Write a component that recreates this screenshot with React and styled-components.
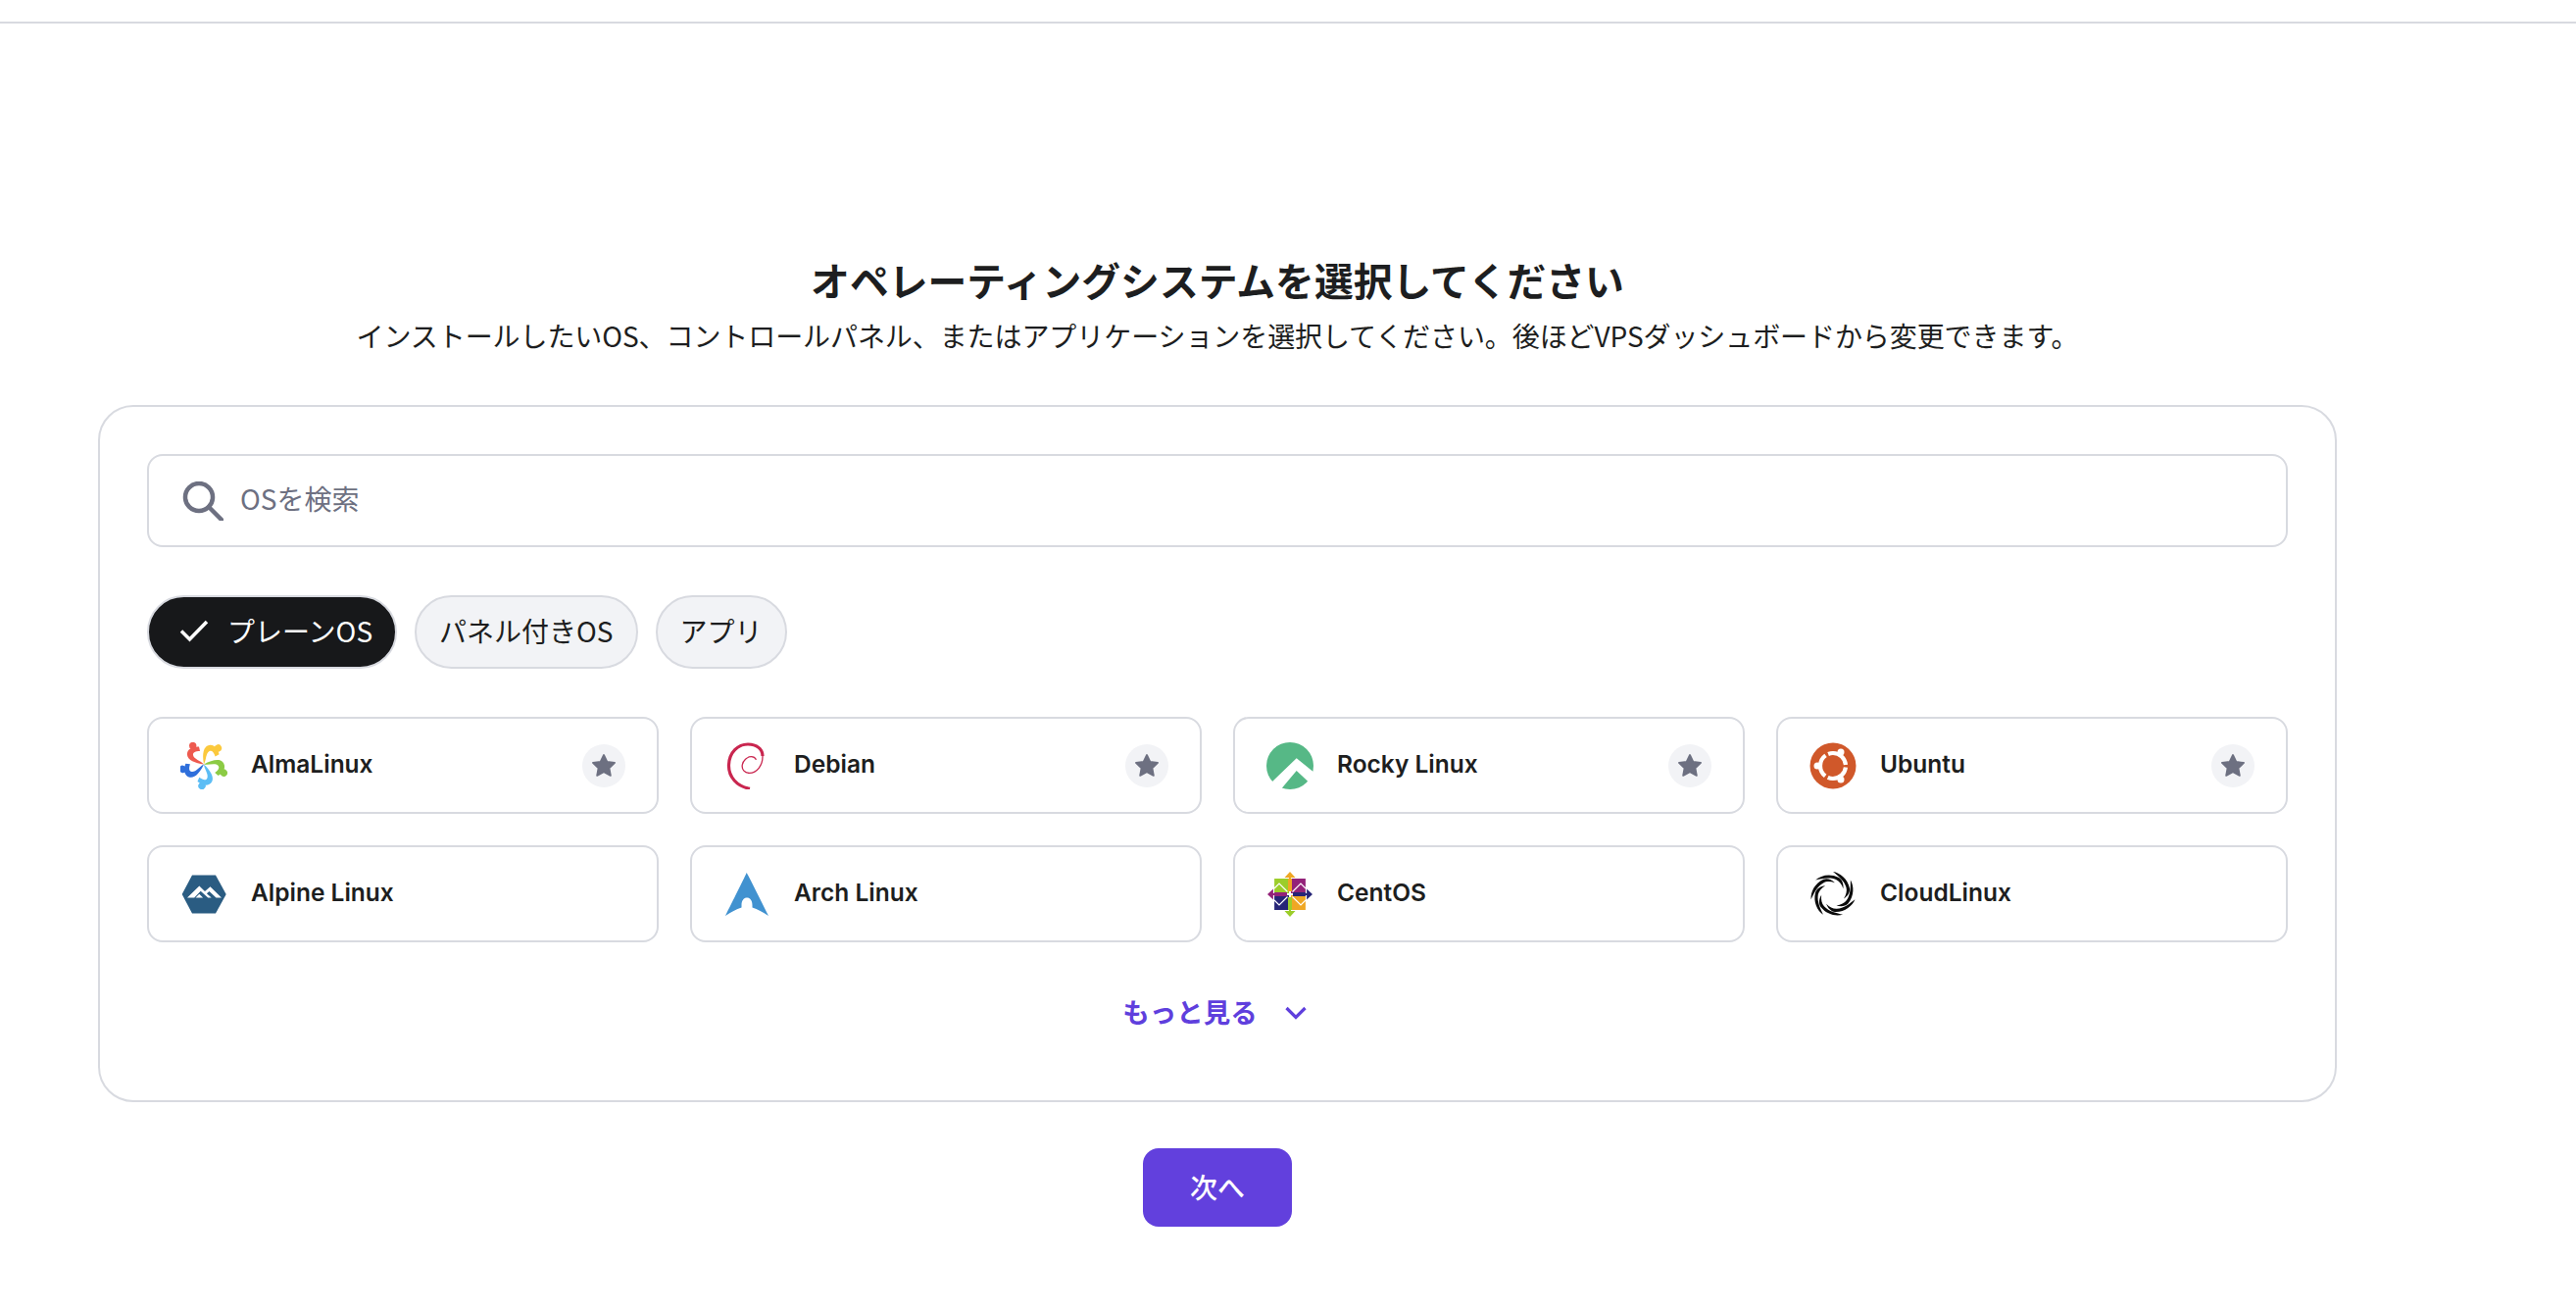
import styled, { createGlobalStyle } from "styled-components";
import { useState } from "react";

const GlobalStyle = createGlobalStyle`
  * { box-sizing: border-box; }
  html, body { margin: 0; padding: 0; background: #fff; }
  body {
    font-family: "Inter", "Noto Sans CJK JP", sans-serif;
    color: #1d1e20;
  }
`;

const CJK = `"Noto Sans CJK JP", "Inter", sans-serif`;

const AlmaLogo = () => {
  const parts = [
    ["#ee5a4f", 0],
    ["#fbc93d", 72],
    ["#8ccb45", 144],
    ["#5cbdf5", 216],
    ["#2f6fdb", 288],
  ];
  return (
    <svg width="48" height="48" viewBox="0 0 48 48">
      {parts.map(([color, angle]) => (
        <g key={angle} transform={`rotate(${angle} 24 22.5)`} fill={color}>
          <circle cx="12.7" cy="3.6" r="3.7" />
          <path d="M19 4.500C11 4 6.500 8 7 13c.5 5 8 8.500 17 9.500-3-3.500-10.500-5.500-11-9.500-.3-2.500 2-4 7-4z" />
        </g>
      ))}
    </svg>
  );
};

const DebianLogo = () => (
  <svg width="48" height="48" viewBox="0 0 48 48" fill="none" stroke="#c9264f">
    <path strokeWidth="3.2" d="M27 47.300C14 45 5 35.500 5.500 23 6 10 15 2 25 2c9 0 15 5 15 12" />
    <path strokeWidth="1.300" d="M40 13.800c.3 10-6 17.500-13.500 17.500-5 0-8-3.800-7.200-8.300.8-4.500 4.700-8.300 9.200-8.300 2.500 0 4 1.200 5 3" />
  </svg>
);

const RockyLogo = () => (
  <svg width="48" height="48" viewBox="0 0 48 48">
    <circle cx="24" cy="24" r="24" fill="#56b886" />
    <polygon fill="#fff" points="30.7,16.3 5,41 14.7,48 30.7,29 43,40.500 49,31" />
  </svg>
);

const UbuntuLogo = () => (
  <svg width="48" height="48" viewBox="0 0 48 48">
    <circle cx="24" cy="24" r="23.5" fill="#d0582a" />
    <circle
      cx="24"
      cy="24"
      r="13"
      fill="none"
      stroke="#fff"
      strokeWidth="4.2"
      strokeDasharray="24.2 3"
      strokeDashoffset="-1.5"
    />
    <circle cx="32" cy="10" r="3.500" fill="#fff" />
    <circle cx="8" cy="24" r="3.500" fill="#fff" />
    <circle cx="32" cy="38" r="3.500" fill="#fff" />
  </svg>
);

const AlpineLogo = () => (
  <svg width="48" height="48" viewBox="0 0 48 48">
    <polygon fill="#2a5c82" points="12,4.500 36,4.500 46.700,24 36,43.500 12,43.500 1.700,24" />
    <path
      fill="#fff"
      d="M7 27.500 19.300 15.500 25 21l5.500-4.800L42 27.500h-5.500l-7-6.500-2.600 2.300 4.800 4.200h-3.500l-7.500-6.800-6.500 6.800zM15.500 27.500l3.800-3.800 3.800 3.800z"
    />
  </svg>
);

const ArchLogo = () => (
  <svg width="48" height="48" viewBox="0 0 48 48">
    <path
      fill="#4192d0"
      d="M23.700 2C20 10 10 30 2 46c6-4 11-6.500 16.500-8.500V35c0-5 2.500-7.500 5.500-7.500s5.500 2.500 5.500 7.500v2.500C35 39.500 40 42 46 46 38 30 28 10 23.700 2z"
    />
  </svg>
);

const CentosLogo = () => (
  <svg width="48" height="48" viewBox="0 0 48 48">
    <rect x="8" y="8" width="15" height="15" fill="#9ccd2a" />
    <rect x="25" y="8" width="15" height="15" fill="#932279" />
    <rect x="8" y="25" width="15" height="15" fill="#262577" />
    <rect x="25" y="25" width="15" height="15" fill="#efa724" />
    <polygon fill="#efa724" points="24,1 30,7.500 26,7.500 26,21 22,21 22,7.500 18,7.500" />
    <polygon fill="#262577" points="47,24 40.500,30 40.500,26 27,26 27,22 40.500,22 40.500,18" />
    <polygon fill="#9ccd2a" points="24,47 18,40.500 22,40.500 22,27 26,27 26,40.500 30,40.500" />
    <polygon fill="#932279" points="1,24 7.500,18 7.500,22 21,22 21,26 7.500,26 7.500,30" />
    <g stroke="#fff" strokeWidth="1.2" fill="none">
      <path d="M21.500 21.500 13 13l-5 5M26.500 21.500 35 13l5 5M21.500 26.500 13 35l-5-5M26.500 26.500 35 35l5-5" />
      <path d="M7.500 7.500h15.500M25 7.500h15.500v15.500M40.500 25v15.500H25M23 40.500H7.500V25M7.500 23V7.500" />
    </g>
  </svg>
);

const CloudLinuxLogo = () => (
  <svg width="48" height="48" viewBox="0 0 48 48">
    {[0, 51, 103, 154, 206, 257, 309].map((angle) => (
      <path
        key={angle}
        transform={`rotate(${angle} 24 24)`}
        fill="#0b0b0b"
        d="M24 1c7 1 15 7 17 17 .5 4-2 8-6 10.500 2.500-4 3.500-8 2.500-11.500C35.500 10 29 5 24 1z"
      />
    ))}
  </svg>
);

const Star = () => (
  <svg width="28" height="28" viewBox="0 0 24 24" fill="#6d7081">
    <path
      d="M12 2.500l2.900 6 6.600.9-4.800 4.600 1.200 6.500-5.900-3.200-5.900 3.200 1.200-6.500L2.500 9.400l6.600-.9z"
      stroke="#6d7081"
      strokeWidth="1.500"
      strokeLinejoin="round"
    />
  </svg>
);

const oses = [
  { name: "AlmaLinux", Logo: AlmaLogo, star: true },
  { name: "Debian", Logo: DebianLogo, star: true },
  { name: "Rocky Linux", Logo: RockyLogo, star: true },
  { name: "Ubuntu", Logo: UbuntuLogo, star: true },
  { name: "Alpine Linux", Logo: AlpineLogo },
  { name: "Arch Linux", Logo: ArchLogo },
  { name: "CentOS", Logo: CentosLogo },
  { name: "CloudLinux", Logo: CloudLinuxLogo },
];

const App = () => {
  const [tab, setTab] = useState("plain");
  const tabs = [
    { id: "plain", label: "プレーンOS" },
    { id: "panel", label: "パネル付きOS" },
    { id: "app", label: "アプリ" },
  ];

  return (
    <>
      <GlobalStyle />
      <TopBar />
      <Main>
        <Title>オペレーティングシステムを選択してください</Title>
        <Subtitle>
          インストールしたいOS、コントロールパネル、またはアプリケーションを選択してください。後ほどVPSダッシュボードから変更できます。
        </Subtitle>
        <Panel>
          <SearchBox>
            <svg width="42" height="40" viewBox="0 0 42 40" fill="none" stroke="#6d7081" strokeWidth="4.5">
              <circle cx="17" cy="16" r="14" />
              <path d="M27 26 40 39" strokeLinecap="round" />
            </svg>
            <SearchInput placeholder="OSを検索" />
          </SearchBox>
          <Tabs>
            {tabs.map((t) => (
              <Tab key={t.id} $active={tab === t.id} onClick={() => setTab(t.id)}>
                {tab === t.id && (
                  <svg width="30" height="24" viewBox="0 0 30 24" fill="none" stroke="#fff" strokeWidth="3.500">
                    <path d="M2 12.500 10.500 21 28 3" />
                  </svg>
                )}
                {t.label}
              </Tab>
            ))}
          </Tabs>
          <Grid>
            {oses.map(({ name, Logo, star }) => (
              <OsCard key={name}>
                <Logo />
                <OsName>{name}</OsName>
                {star && (
                  <StarButton>
                    <Star />
                  </StarButton>
                )}
              </OsCard>
            ))}
          </Grid>
          <MoreRow>
            <MoreButton>
              もっと見る
              <Chevron width="22" height="14" viewBox="0 0 22 14" fill="none" stroke="#5f3fdd" strokeWidth="3.200">
                <path d="M1.500 2 11 11.500 20.500 2" />
              </Chevron>
            </MoreButton>
          </MoreRow>
        </Panel>
        <NextButton>次へ</NextButton>
      </Main>
    </>
  );
};

export default App;

const TopBar = styled.div`
  height: 24px;
  border-bottom: 2px solid #d8dae0;
`;

const Main = styled.main`
  width: 2284px;
  margin-left: 100px;
  padding-top: 233px;
  display: flex;
  flex-direction: column;
  align-items: center;
`;

const Title = styled.h1`
  margin: 0;
  font-family: ${CJK};
  font-size: 39.8px;
  line-height: 56px;
  font-weight: 700;
  color: #1d1e20;
`;

const Subtitle = styled.p`
  margin: 9px 0 0;
  font-family: ${CJK};
  font-size: 28px;
  line-height: 40px;
  font-weight: 400;
  letter-spacing: -0.08px;
  color: #1d1e20;
`;

const Panel = styled.section`
  width: 100%;
  height: 711px;
  margin-top: 51px;
  padding: 48px;
  border: 2px solid #d8dae0;
  border-radius: 36px;
  display: flex;
  flex-direction: column;
`;

const SearchBox = styled.label`
  height: 95px;
  padding: 0 34px;
  border: 2px solid #d8dae0;
  border-radius: 16px;
  display: flex;
  align-items: center;
  gap: 17px;
`;

const SearchInput = styled.input`
  flex: 1;
  padding: 0 0 5px;
  border: none;
  outline: none;
  background: none;
  font-family: ${CJK};
  font-size: 28px;
  color: #1d1e20;
  &::placeholder {
    color: #6d7081;
    opacity: 1;
  }
`;

const Tabs = styled.div`
  margin-top: 49px;
  display: flex;
  gap: 18px;
`;

const Tab = styled.button`
  height: 75px;
  padding: ${(p) => (p.$active ? "0 23px 3px 31px" : "0 23px 3px")};
  border: 2px solid #d8dae0;
  border-radius: 38px;
  background: ${(p) => (p.$active ? "#17181a" : "#f2f3f6")};
  color: ${(p) => (p.$active ? "#fff" : "#1d1e20")};
  font-family: ${CJK};
  font-size: 28px;
  display: flex;
  align-items: center;
  gap: 19px;
  cursor: pointer;
`;

const Grid = styled.div`
  margin-top: 49px;
  display: grid;
  grid-template-columns: repeat(4, 1fr);
  gap: 32px;
`;

const OsCard = styled.div`
  height: 99px;
  padding: 0 32px;
  border: 2px solid #d8dae0;
  border-radius: 16px;
  display: flex;
  align-items: center;
  gap: 24px;
`;

const OsName = styled.span`
  flex: 1;
  padding-bottom: 3px;
  font-size: 24.5px;
  font-weight: 600;
  color: #1d1e20;
`;

const StarButton = styled.button`
  width: 44px;
  height: 44px;
  padding: 0;
  border: none;
  border-radius: 50%;
  background: #f2f3f6;
  display: flex;
  align-items: center;
  justify-content: center;
  cursor: pointer;
`;

const MoreRow = styled.div`
  margin-top: 50px;
  padding-right: 6px;
  display: flex;
  justify-content: center;
`;

const MoreButton = styled.button`
  padding: 0;
  border: none;
  background: none;
  color: #5f3fdd;
  font-family: ${CJK};
  font-size: 27.5px;
  line-height: 40px;
  font-weight: 700;
  display: flex;
  align-items: center;
  gap: 28px;
  cursor: pointer;
`;

const Chevron = styled.svg`
  margin-top: 3px;
`;

const NextButton = styled.button`
  width: 152px;
  height: 80px;
  margin-top: 47px;
  padding: 0 0 3px;
  border: none;
  border-radius: 16px;
  background: #6240dd;
  color: #fff;
  font-family: ${CJK};
  font-size: 28px;
  font-weight: 500;
  cursor: pointer;
`;
